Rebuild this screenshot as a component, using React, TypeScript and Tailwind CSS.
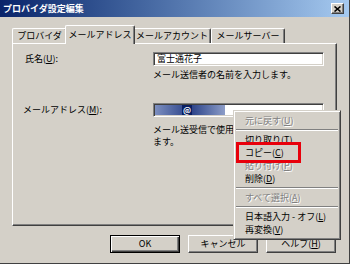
import React from 'react';

const jp = "font-['Noto_Sans_CJK_JP',sans-serif]";

function Mn({ children }: { children: React.ReactNode }) {
  return <span className="underline">{children}</span>;
}

function Tab({ label, w, selected }: { label: string; w: string; selected?: boolean }) {
  if (selected) {
    return (
      <div
        className={`relative z-10 -mx-[2px] -mb-[1px] h-[19px] ${w} flex items-center justify-center bg-[#d4d0c8] border-t border-l border-white border-r border-r-[#404040] rounded-t-[2px] shadow-[inset_-1px_0_0_#808080]`}
      >
        {label}
      </div>
    );
  }
  return (
    <div
      className={`h-[15px] ${w} flex items-center justify-center border-t border-l border-white border-r border-r-[#404040] rounded-t-[2px] shadow-[inset_-1px_0_0_#808080]`}
    >
      {label}
    </div>
  );
}

function Sunken({ children, className = '' }: { children?: React.ReactNode; className?: string }) {
  return (
    <div
      className={`bg-white border border-t-[#808080] border-l-[#808080] border-b-white border-r-white shadow-[inset_1px_1px_0_#404040,inset_-1px_-1px_0_#d4d0c8] ${className}`}
    >
      {children}
    </div>
  );
}

function Btn({ children, primary }: { children: React.ReactNode; primary?: boolean }) {
  return (
    <div
      className={`w-[70px] h-[18px] flex items-center justify-center ${
        primary
          ? 'border border-black shadow-[inset_1px_1px_0_#fff,inset_-1px_-1px_0_#404040,inset_-2px_-2px_0_#808080]'
          : 'border border-t-white border-l-white border-b-[#404040] border-r-[#404040] shadow-[inset_-1px_-1px_0_#808080]'
      }`}
    >
      {children}
    </div>
  );
}

function Item({ children, disabled }: { children: React.ReactNode; disabled?: boolean }) {
  return (
    <div
      className={`h-[13px] pl-[10px] flex items-center whitespace-nowrap ${
        disabled ? 'text-[#808080] [text-shadow:1px_1px_0_#fff]' : 'text-black'
      }`}
    >
      {children}
    </div>
  );
}

function Sep() {
  return (
    <div className="h-[6px] flex items-center px-[1px]">
      <div className="w-full h-[2px] border-t border-t-[#808080] border-b border-b-white" />
    </div>
  );
}

export default function App() {
  return (
    <div
      className={`relative w-[350px] h-[264px] bg-[#d4d0c8] text-[9px] leading-[12px] text-black overflow-hidden flex flex-col border-r border-b border-r-[#404040] border-b-[#404040] ${jp}`}
    >
      {/* title bar */}
      <div className="h-[17px] shrink-0 flex items-center justify-between pl-[3px] pr-[5px] bg-linear-to-r from-[#0a246a] to-[#a6caf0]">
        <span className="text-white font-bold">プロバイダ設定編集</span>
        <div className="w-[13px] h-[11px] flex items-center justify-center bg-[#d4d0c8] border border-t-white border-l-white border-b-[#404040] border-r-[#404040] shadow-[inset_-1px_-1px_0_#808080]">
          <svg width="7" height="6" viewBox="0 0 7 6">
            <path d="M0.5 0.5 L6.5 5.5 M6.5 0.5 L0.5 5.5" stroke="#000" strokeWidth="1.6" />
          </svg>
        </div>
      </div>

      <div className="flex-1 flex flex-col pl-[12px] pr-[12px]">
        {/* tabs */}
        <div className="mt-[8px] h-[18px] flex items-end">
          <Tab label="プロバイダ" w="w-[55px]" />
          <Tab label="メールアドレス" w="w-[70px]" selected />
          <Tab label="メールアカウント" w="w-[78px]" />
          <Tab label="メールサーバー" w="w-[74px]" />
        </div>

        {/* panel */}
        <div className="h-[183px] flex flex-col pl-[12px] pt-[8px] border border-t-white border-l-white border-r-[#404040] border-b-[#404040] shadow-[inset_-1px_-1px_0_#808080]">
          <div className="flex items-center">
            <div className="w-[128px]">
              氏名(<Mn>U</Mn>):
            </div>
            <Sunken className="w-[171px] h-[14px] flex items-center pl-[3px]">富士通花子</Sunken>
          </div>
          <div className="ml-[128px] mt-[3px]">メール送信者の名前を入力します。</div>

          <div className="flex items-center mt-[22px]">
            <div className="w-[128px] -ml-[2px]">
              メールアドレス(<Mn>M</Mn>):
            </div>
            <Sunken className="w-[171px] h-[14px] flex items-center pl-[1px] ml-[2px]">
              <div className="w-[70px] h-[10px] flex items-center pl-[27px] bg-linear-to-r from-[#7d8fc0] via-[#2a3f86] to-[#8d9dc8]">
                <span className="text-[8px] leading-[10px] font-bold text-white bg-[#0a1f63] px-[1px]">@</span>
              </div>
            </Sunken>
          </div>
          <div className="ml-[128px] mt-[7px] whitespace-nowrap">
            メール送受信で使用
            <br />
            ます。
          </div>
        </div>

        {/* buttons */}
        <div className="mt-[9px] flex justify-end gap-[8px] pr-[1px]">
          <Btn primary>OK</Btn>
          <Btn>キャンセル</Btn>
          <Btn>
            ヘルプ(<Mn>H</Mn>)
          </Btn>
        </div>
      </div>

      {/* context menu */}
      <div className="absolute left-[233px] top-[110px] w-[108px] py-[3px] px-[1px] bg-[#d4d0c8] border border-t-[#d4d0c8] border-l-[#d4d0c8] border-b-[#404040] border-r-[#404040] shadow-[inset_1px_1px_0_#fff,inset_-1px_-1px_0_#808080]">
        <Item disabled>
          元に戻す(<Mn>U</Mn>)
        </Item>
        <Sep />
        <Item>
          切り取り(<Mn>T</Mn>)
        </Item>
        <Item>
          コピー(<Mn>C</Mn>)
        </Item>
        <Item disabled>
          貼り付け(<Mn>P</Mn>)
        </Item>
        <Item>
          削除(<Mn>D</Mn>)
        </Item>
        <Sep />
        <Item disabled>
          すべて選択(<Mn>A</Mn>)
        </Item>
        <Sep />
        <Item>
          日本語入力 - オフ(<Mn>L</Mn>)
        </Item>
        <Item>
          再変換(<Mn>V</Mn>)
        </Item>

        {/* highlight box */}
        <div className="absolute left-[2px] top-[31px] w-[65px] h-[21px] border-[3px] border-[#e8000b]" />
      </div>
    </div>
  );
}
